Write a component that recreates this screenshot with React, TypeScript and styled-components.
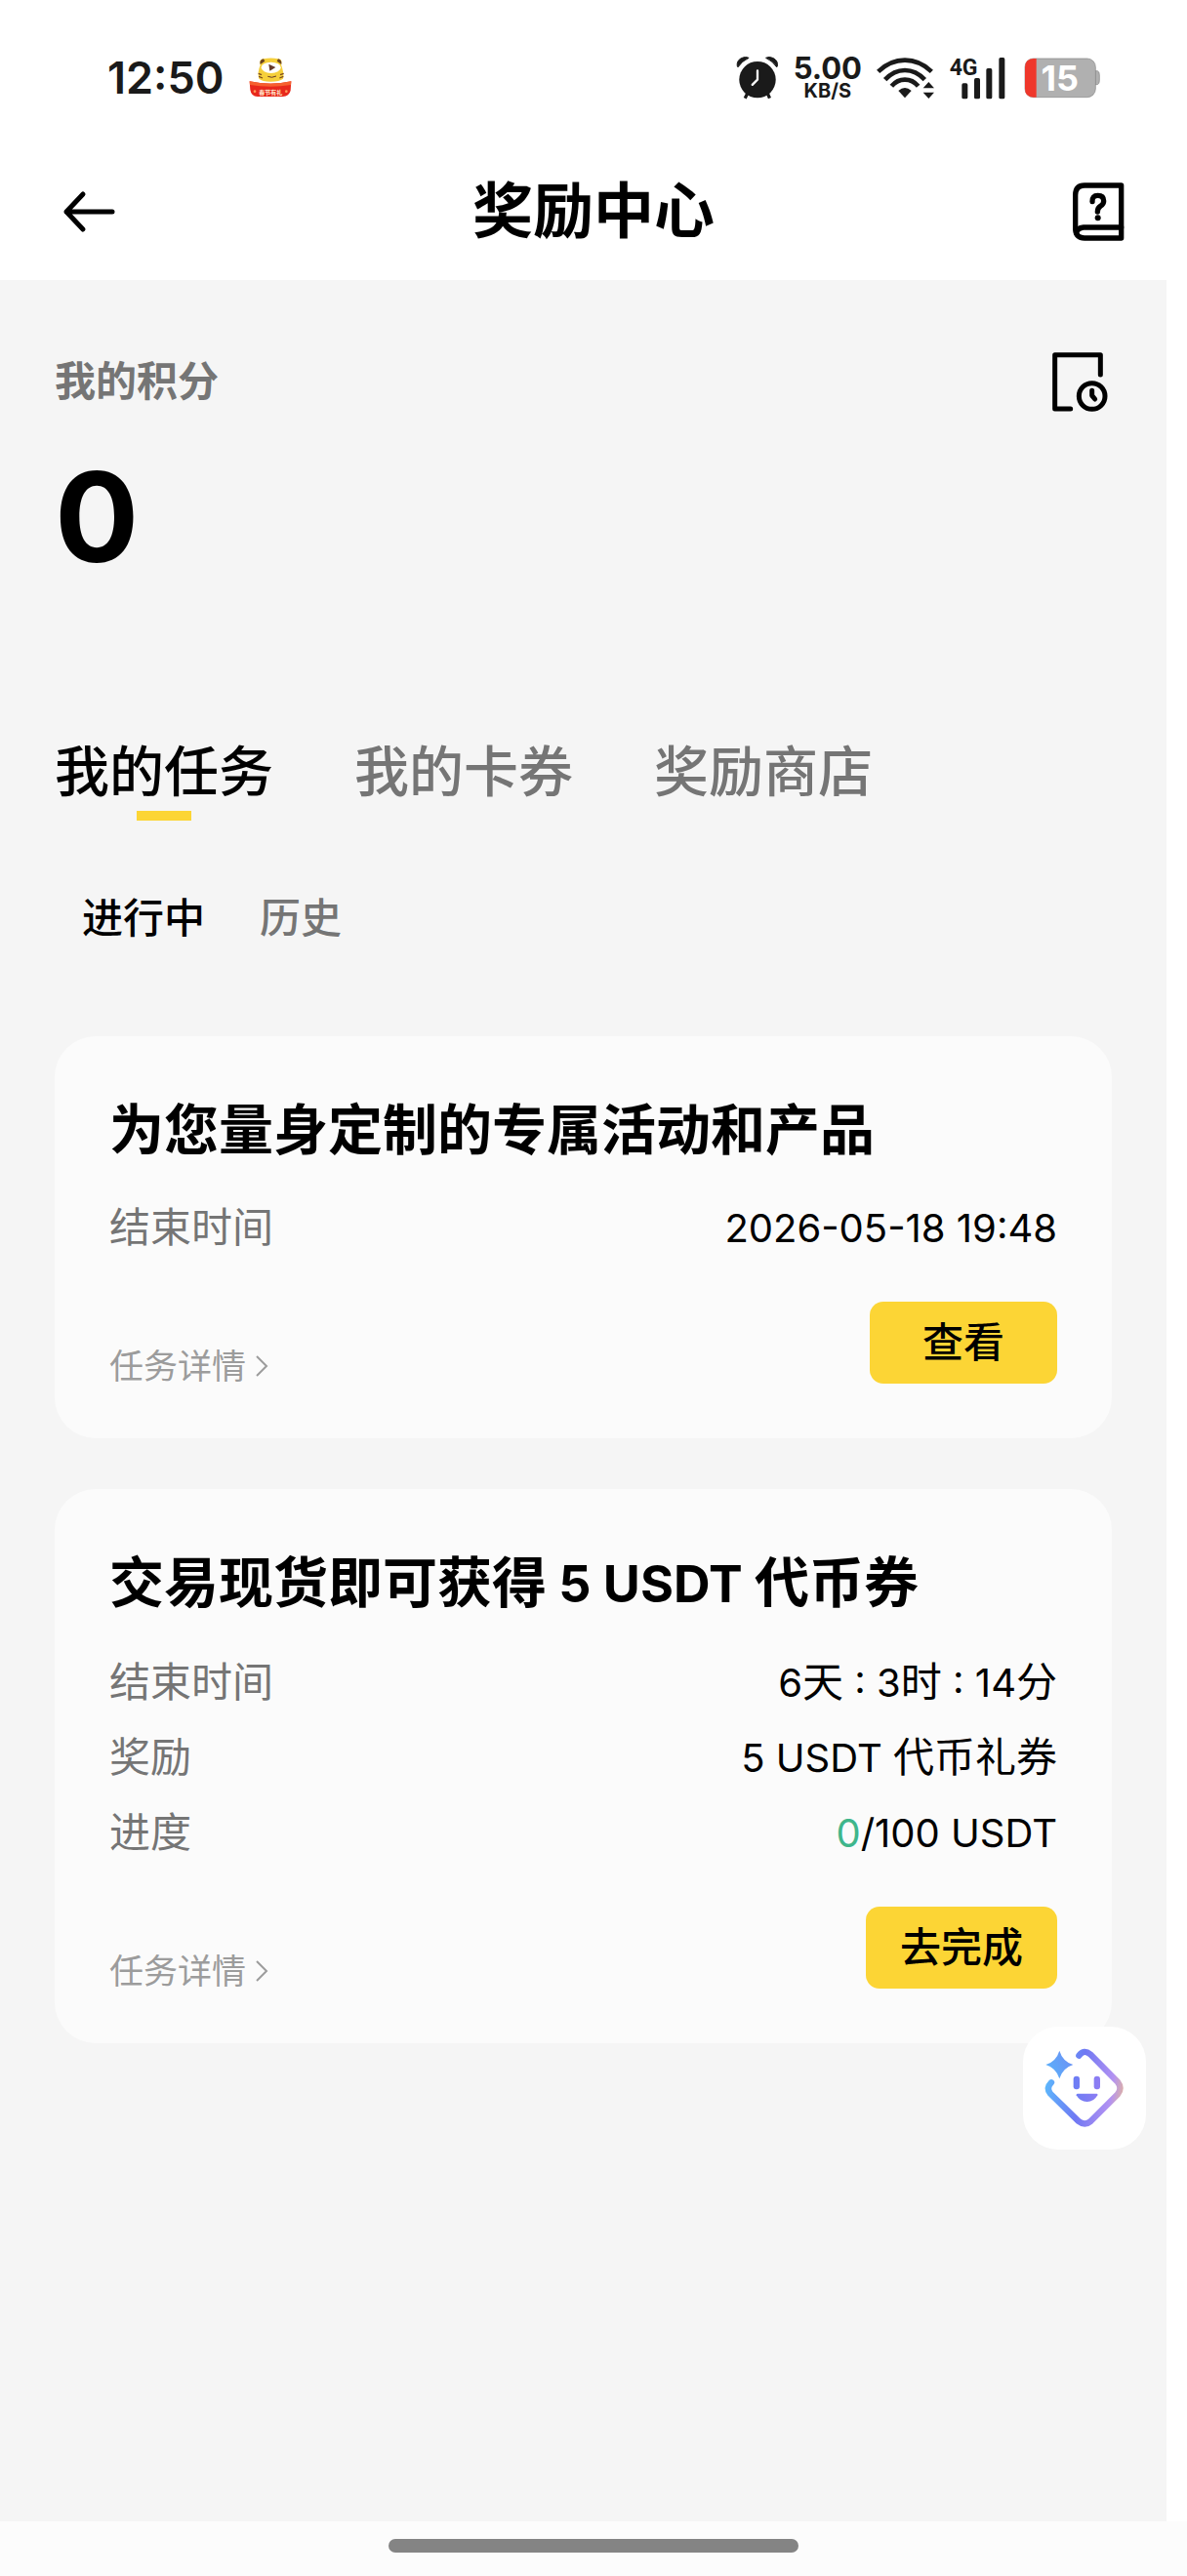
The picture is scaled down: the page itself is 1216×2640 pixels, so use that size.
import React, { useState } from "react";
import styled, { createGlobalStyle } from "styled-components";

const GlobalStyle = createGlobalStyle`
  * { box-sizing: border-box; }
  body {
    margin: 0;
    background: #ffffff;
    color: #000000;
    font-family: Inter, "Noto Sans CJK SC", sans-serif;
  }
  button { font: inherit; color: inherit; border: 0; padding: 0; background: none; cursor: pointer; }
  h1, h2, p, dl, dd { margin: 0; }
`;

const Screen = styled.div`
  min-height: 100vh;
  display: flex;
  flex-direction: column;
`;

const StatusBar = styled.div`
  height: 147px;
  padding: 12px 89px 0 110px;
  display: flex;
  align-items: center;
  justify-content: space-between;
  color: #1a1a1a;
`;

const StatusGroup = styled.div<{ $gap: number }>`
  display: flex;
  align-items: center;
  gap: ${(p) => p.$gap}px;
`;

const Clock = styled.span`
  font-size: 45px;
  line-height: 56px;
  font-weight: 600;
`;

const NetSpeed = styled.span`
  display: flex;
  flex-direction: column;
  align-items: center;
  font-weight: 700;
  font-size: 31px;
  line-height: 26px;
`;

const NetUnit = styled.small`
  font-size: 20px;
  line-height: 20px;
  font-weight: 700;
`;

const Header = styled.header`
  height: 140px;
  padding: 0 64px;
  display: grid;
  grid-template-columns: 1fr auto 1fr;
  align-items: center;
`;

const PageTitle = styled.h1`
  font-size: 62px;
  line-height: 80px;
  font-weight: 700;
`;

const IconButton = styled.button<{ $end?: boolean }>`
  display: flex;
  justify-self: ${(p) => (p.$end ? "end" : "start")};
`;

const Panel = styled.main`
  flex: 1;
  margin-right: 21px;
  padding: 76px 56px 56px;
  background: #f5f5f5;
`;

const PointsHead = styled.div`
  display: flex;
  align-items: center;
  justify-content: space-between;
  height: 56px;
  padding-right: 4px;
`;

const PointsLabel = styled.h2`
  font-size: 42px;
  line-height: 56px;
  font-weight: 700;
  color: #757575;
`;

const PointsValue = styled.p`
  margin-top: 43px;
  font-size: 128px;
  line-height: 136px;
  font-weight: 700;
`;

const Tabs = styled.div`
  display: flex;
  gap: 83px;
  margin-top: 153px;
`;

const Tab = styled.button<{ $active: boolean }>`
  display: flex;
  flex-direction: column;
  align-items: center;
  font-size: 56px;
  line-height: 80px;
  font-weight: 500;
  color: ${(p) => (p.$active ? "#000000" : "#757575")};

  &::after {
    content: "";
    width: 56px;
    height: 10px;
    background: ${(p) => (p.$active ? "#fcd535" : "transparent")};
  }
`;

const SubTabs = styled.div`
  display: flex;
  gap: 56px;
  margin-top: 72px;
  padding: 0 28px;
`;

const SubTab = styled.button<{ $active: boolean }>`
  font-size: 42px;
  line-height: 56px;
  font-weight: 500;
  color: ${(p) => (p.$active ? "#000000" : "#757575")};
`;

const TaskList = styled.section`
  display: flex;
  flex-direction: column;
  gap: 52px;
  margin-top: 93px;
`;

const Card = styled.article`
  padding: 56px;
  border-radius: 42px;
  background: #fbfbfb;
`;

const CardTitle = styled.h2`
  font-size: 56px;
  line-height: 80px;
  font-weight: 700;
`;

const Rows = styled.dl`
  display: flex;
  flex-direction: column;
  gap: 21px;
  margin-top: 32px;
  font-size: 42px;
  line-height: 56px;
`;

const Row = styled.div`
  display: flex;
  justify-content: space-between;
  height: 56px;
`;

const RowLabel = styled.dt`
  color: #757575;
`;

const RowValue = styled.dd`
  white-space: pre;
`;

const Num = styled.span`
  font-size: 40px;
`;

const TitleNum = styled.span`
  font-size: 52px;
  font-weight: 700;
`;

const Done = styled.span`
  color: #3fb68b;
`;

const Actions = styled.div`
  display: flex;
  align-items: flex-end;
  justify-content: space-between;
  margin-top: 48px;
`;

const DetailLink = styled.a`
  display: flex;
  align-items: center;
  gap: 10px;
  font-size: 35px;
  line-height: 36px;
  color: #9c9c9c;
  text-decoration: none;
`;

const PrimaryButton = styled.button`
  height: 84px;
  min-width: 192px;
  padding: 0 35px;
  border-radius: 14px;
  background: #fcd535;
  font-size: 42px;
  line-height: 56px;
  font-weight: 500;
`;

const Assistant = styled.button`
  position: fixed;
  right: 42px;
  bottom: 437px;
  width: 126px;
  height: 126px;
  border-radius: 36px;
  background: #ffffff;
`;

const HomeBar = styled.footer`
  height: 56px;
  display: flex;
  align-items: center;
  justify-content: center;
  padding-bottom: 7px;
  background: #fcfcfc;
`;

const HomeHandle = styled.span`
  width: 420px;
  height: 14px;
  border-radius: 7px;
  background: #848484;
`;

const MascotIcon = () => (
  <svg width="44" height="44" viewBox="498 60 132 132" aria-hidden="true">
    <path d="M500 136 Q565 150 628 136 L626 164 Q622 182 602 183 L524 183 Q505 182 502 162 Z" fill="#e8281c" />
    <path d="M533 86 Q528 68 543 67 Q566 62 588 67 Q602 68 597 84 Q607 112 603 128 Q592 137 565 137 Q538 137 529 128 Q523 108 533 86 Z" fill="#f5cf3b" />
    <path d="M533 84 Q529 70 543 67 L547 74 Z M598 84 Q600 70 588 67 L584 74 Z" fill="#6b4420" />
    <ellipse cx="566" cy="94" rx="30" ry="17" fill="#ffffff" />
    <path d="M559 83 L580 93 L562 104 Z" fill="#64392a" />
    <path d="M556 121 Q568 127 582 120" stroke="#64392a" strokeWidth="3" fill="none" />
    <path d="M527 112 L537 116 M528 121 L540 126 M605 112 L594 116 M604 121 L592 126" stroke="#7a4c1e" strokeWidth="4" />
    <path d="M500 136 Q565 149 628 136 L627 147 Q565 158 501 147 Z" fill="#f6602f" />
    <circle cx="516" cy="167" r="4" fill="#ff9a5a" />
    <circle cx="613" cy="167" r="4" fill="#ff9a5a" />
    <text x="565" y="176" textAnchor="middle" fontSize="18" fontWeight="700" fill="#ffe9cf">春节有礼</text>
  </svg>
);

const AlarmIcon = () => (
  <svg width="44" height="44" viewBox="52 50 130 134" aria-hidden="true">
    <circle cx="117" cy="122" r="57" fill="currentColor" />
    <path d="M54 80 Q51 64 66 55 Q80 48 90 54 Q68 64 56 83 Z M179 80 Q182 64 167 55 Q153 48 143 54 Q165 64 177 83 Z" fill="currentColor" stroke="currentColor" strokeWidth="3" />
    <path d="M86 164 L78 180 M148 164 L155 180" stroke="currentColor" strokeWidth="10" />
    <path d="M117 94 L117 122 L101 138" stroke="#ffffff" strokeWidth="7" fill="none" strokeLinecap="round" />
  </svg>
);

const WifiIcon = () => (
  <svg width="60" height="44" viewBox="473 50 180 132" aria-hidden="true">
    <g fill="none" stroke="currentColor" strokeWidth="14">
      <path d="M478 96 Q515 61 560 61 Q605 61 642 96" />
      <path d="M499 121 Q526 92 560 92 Q594 92 621 121" />
      <path d="M519 141 Q536 121 560 121 Q584 121 601 141" />
    </g>
    <path d="M540 155 Q560 137 580 155 L560 177 Z" fill="currentColor" />
    <path d="M616 147 L633 128 L650 147 Z M616 160 L633 179 L650 160 Z" fill="currentColor" />
  </svg>
);

const SignalIcon = () => (
  <svg width="61" height="54" viewBox="698 35 183 162" aria-hidden="true">
    <text x="697" y="107" fontSize="69" fontWeight="700" fontFamily="Roboto, sans-serif" fill="currentColor">4G</text>
    <g fill="currentColor">
      <rect x="735" y="132" width="18" height="48" rx="5" />
      <rect x="773" y="116" width="18" height="64" rx="5" />
      <rect x="810" y="86" width="18" height="94" rx="5" />
      <rect x="849" y="53" width="18" height="127" rx="5" />
    </g>
  </svg>
);

const BatteryIcon = () => (
  <svg width="78" height="42" viewBox="928 57 234 126" aria-label="15%">
    <path d="M1147 98 H1154 Q1160 100 1160 110 V128 Q1160 138 1154 140 H1147 Z" fill="#b0b0b0" stroke="#858585" strokeWidth="2" />
    <rect x="931" y="60" width="217" height="119" rx="26" fill="#b0b0b0" stroke="#858585" strokeWidth="2" />
    <path d="M966 60 H957 Q931 61 931 87 V152 Q931 178 957 179 H966 Z" fill="#ef372b" />
    <text x="1038" y="158" textAnchor="middle" fontSize="108" fontWeight="700" fill="#ffffff">15</text>
  </svg>
);

const BackIcon = () => (
  <svg width="54" height="44" viewBox="0 0 54 44" fill="none" stroke="#000000" strokeWidth="5" strokeLinecap="round" strokeLinejoin="round" aria-hidden="true">
    <path d="M51 22 H4 M21 4 L4 22 L21 40" />
  </svg>
);

const BookIcon = () => (
  <svg width="53" height="60" viewBox="177 81 159 180" fill="none" stroke="#000000" strokeWidth="16" strokeLinecap="round" strokeLinejoin="round" aria-hidden="true">
    <path d="M326 90 H213 Q185 90 185 120 V225 Q187 252 213 252 H326 Z" />
    <path d="M326 219 H210 Q190 221 188 237" />
    <path d="M237 140 Q236 121 254 121 Q272 121 272 138 Q272 148 262 154 Q253 160 253 171" />
    <circle cx="254" cy="190" r="9" fill="#000000" stroke="none" />
  </svg>
);

const RecordIcon = () => (
  <svg width="57" height="61" viewBox="114 605 171 183" fill="none" stroke="#000000" strokeWidth="15" strokeLinecap="round" strokeLinejoin="round" aria-hidden="true">
    <path d="M262 674 V613 H122 V779 H170" />
    <circle cx="236" cy="740" r="40" />
    <path d="M236 723 V738 L245 749" />
  </svg>
);

const ChevronIcon = () => (
  <svg width="13" height="22" viewBox="0 0 13 22" fill="none" stroke="#9c9c9c" strokeWidth="2" aria-hidden="true">
    <path d="M1 1 L11 11 L1 21" />
  </svg>
);

const AssistantIcon = () => (
  <svg width="126" height="126" viewBox="85 81 378 378" aria-hidden="true">
    <defs>
      <linearGradient id="assistant" gradientUnits="userSpaceOnUse" x1="153" y1="250" x2="393" y2="285">
        <stop offset="0" stopColor="#5cb8fc" />
        <stop offset="0.45" stopColor="#6f78f3" />
        <stop offset="0.85" stopColor="#b392f2" />
        <stop offset="1" stopColor="#dcb0a8" />
      </linearGradient>
      <linearGradient id="spark" gradientUnits="userSpaceOnUse" x1="160" y1="220" x2="235" y2="180">
        <stop offset="0" stopColor="#5cb0fa" />
        <stop offset="1" stopColor="#6a92f5" />
      </linearGradient>
      <linearGradient id="face" gradientUnits="userSpaceOnUse" x1="240" y1="0" x2="322" y2="0">
        <stop offset="0" stopColor="#6b7df4" />
        <stop offset="1" stopColor="#8f7df3" />
      </linearGradient>
    </defs>
    <path
      d="M257 170 Q272 149 292 166 L376 251 Q391 270 376 289 L293 372 Q275 387 256 372 L169 287 Q155 270 172 253"
      fill="none"
      stroke="url(#assistant)"
      strokeWidth="19"
      strokeLinecap="round"
    />
    <path d="M197 155 Q207 188 239 198 Q207 208 197 241 Q187 208 155 198 Q187 188 197 155 Z" fill="url(#spark)" />
    <g fill="url(#face)">
      <rect x="240" y="233" width="19" height="41" rx="9" />
      <rect x="303" y="233" width="19" height="41" rx="9" />
      <path d="M252 287 H312 Q316 288 314 292 Q303 312 282 312 Q260 312 249 292 Q248 288 252 287 Z" />
    </g>
  </svg>
);

const TABS = ["我的任务", "我的卡券", "奖励商店"];
const SUB_TABS = ["进行中", "历史"];

type TaskProps = {
  title: React.ReactNode;
  rows: { label: string; value: React.ReactNode }[];
  action: string;
};

const Task = ({ title, rows, action }: TaskProps) => (
  <Card>
    <CardTitle>{title}</CardTitle>
    <Rows>
      {rows.map((row) => (
        <Row key={row.label}>
          <RowLabel>{row.label}</RowLabel>
          <RowValue>{row.value}</RowValue>
        </Row>
      ))}
    </Rows>
    <Actions>
      <DetailLink href="#detail">
        任务详情
        <ChevronIcon />
      </DetailLink>
      <PrimaryButton>{action}</PrimaryButton>
    </Actions>
  </Card>
);

export default function App() {
  const [tab, setTab] = useState(0);
  const [subTab, setSubTab] = useState(0);

  return (
    <Screen>
      <GlobalStyle />
      <StatusBar>
        <StatusGroup $gap={26}>
          <Clock>12:50</Clock>
          <MascotIcon />
        </StatusGroup>
        <StatusGroup $gap={15}>
          <AlarmIcon />
          <NetSpeed>
            5.00
            <NetUnit>KB/S</NetUnit>
          </NetSpeed>
          <WifiIcon />
          <SignalIcon />
          <BatteryIcon />
        </StatusGroup>
      </StatusBar>

      <Header>
        <IconButton aria-label="返回">
          <BackIcon />
        </IconButton>
        <PageTitle>奖励中心</PageTitle>
        <IconButton $end aria-label="帮助">
          <BookIcon />
        </IconButton>
      </Header>

      <Panel>
        <PointsHead>
          <PointsLabel>我的积分</PointsLabel>
          <IconButton aria-label="积分记录">
            <RecordIcon />
          </IconButton>
        </PointsHead>
        <PointsValue>0</PointsValue>

        <Tabs role="tablist">
          {TABS.map((name, i) => (
            <Tab key={name} role="tab" aria-selected={i === tab} $active={i === tab} onClick={() => setTab(i)}>
              {name}
            </Tab>
          ))}
        </Tabs>
        <SubTabs role="tablist">
          {SUB_TABS.map((name, i) => (
            <SubTab key={name} role="tab" aria-selected={i === subTab} $active={i === subTab} onClick={() => setSubTab(i)}>
              {name}
            </SubTab>
          ))}
        </SubTabs>

        <TaskList>
          <Task
            title="为您量身定制的专属活动和产品"
            rows={[{ label: "结束时间", value: <Num>2026-05-18 19:48</Num> }]}
            action="查看"
          />
          <Task
            title={
              <>
                交易现货即可获得<TitleNum> 5 USDT </TitleNum>代币券
              </>
            }
            rows={[
              {
                label: "结束时间",
                value: (
                  <>
                    <Num>6</Num>天<Num> : 3</Num>时<Num> : 14</Num>分
                  </>
                ),
              },
              {
                label: "奖励",
                value: (
                  <>
                    <Num>5 USDT </Num>代币礼券
                  </>
                ),
              },
              {
                label: "进度",
                value: (
                  <Num>
                    <Done>0</Done>/100 USDT
                  </Num>
                ),
              },
            ]}
            action="去完成"
          />
        </TaskList>
      </Panel>

      <HomeBar>
        <HomeHandle />
      </HomeBar>
      <Assistant aria-label="智能助手">
        <AssistantIcon />
      </Assistant>
    </Screen>
  );
}
